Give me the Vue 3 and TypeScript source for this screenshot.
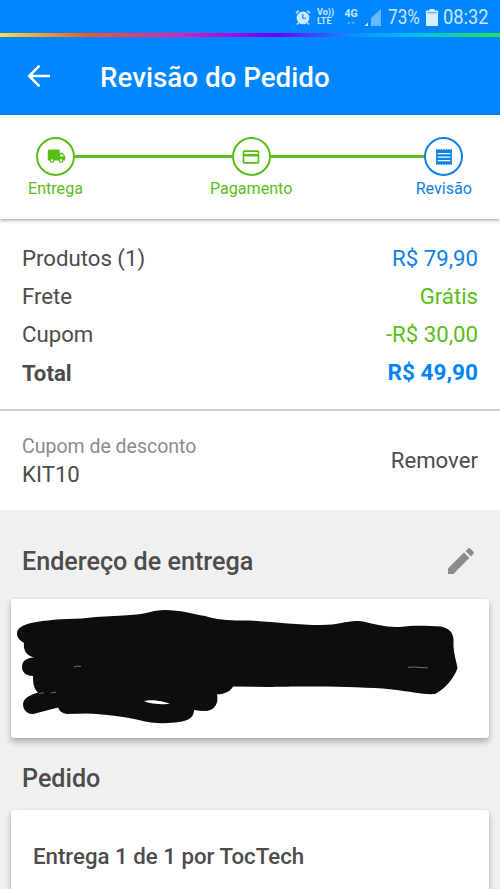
<script setup lang="ts">
type Tone = 'blue' | 'green'

interface SummaryRow {
  label: string
  value: string
  tone: Tone
  total?: boolean
}

const summary: SummaryRow[] = [
  { label: 'Produtos (1)', value: 'R$ 79,90', tone: 'blue' },
  { label: 'Frete', value: 'Grátis', tone: 'green' },
  { label: 'Cupom', value: '-R$ 30,00', tone: 'green' },
  { label: 'Total', value: 'R$ 49,90', tone: 'blue', total: true },
]
</script>

<template>
  <div class="screen">
    <header class="top">
      <div class="status">
        <svg class="alarm" viewBox="0 0 17 17">
          <circle cx="8.5" cy="9" r="6.8" />
          <path class="ears" d="M1 4 4 1.2M16 4 13 1.2M3.8 14 2.2 16M13.2 14l1.6 2" />
          <path class="hands" d="M8.3 5v4.3h3.4" />
        </svg>
        <div class="volte"><span>Vo))</span><span>LTE</span></div>
        <div class="net">
          <span>4G</span>
          <svg viewBox="0 0 11 5"><path d="M2.700 0 5 4H.4zM8.300 5 6 1h4.600z" /></svg>
        </div>
        <svg class="signal" viewBox="0 0 17 17">
          <path class="dim" d="M17 0v17H7V9z" />
          <path class="lit" d="M4 13.500V17H.5z" />
        </svg>
        <span class="pct">73%</span>
        <svg class="battery" viewBox="0 0 12 17">
          <path class="dim" d="M0 2h12v4H0z" />
          <path class="lit" d="M3.300 0h5.400v1.600h2.500q.8 0 .8.8v13.800q0 .8-.8.8H.8q-.8 0-.8-.8V2.400q0-.8.8-.8h2.500zM1.600 3v1.500h8.800V3z" />
        </svg>
        <span class="clock">08:32</span>
      </div>
      <div class="rainbow"></div>
      <div class="appbar">
        <svg class="back" viewBox="0 0 24 24"><path d="M23 12H2.500M12.500 1.700 2.200 12l10.300 10.300" /></svg>
        <h1>Revisão do Pedido</h1>
      </div>
    </header>

    <nav class="steps">
      <div class="step green">
        <div class="ring">
          <svg class="truck" viewBox="0 0 24 24"><path d="M3 3.700q-2 0-2 2v12h2.400a3 3 0 0 0 6 0h5.400a3 3 0 0 0 6 0H23v-5.400L19.700 8H16V3.700zm13.800 6h2.400l2.200 3h-4.600zM6.400 16.200a1.500 1.500 0 1 1 0 3 1.500 1.500 0 0 1 0-3m11.400 0a1.500 1.500 0 1 1 0 3 1.500 1.500 0 0 1 0-3" /></svg>
        </div>
        <span>Entrega</span>
      </div>
      <i class="line first"></i>
      <div class="step green">
        <div class="ring">
          <svg viewBox="0 0 24 24"><path d="M20 4H4c-1.100 0-2 .9-2 2v12c0 1.100.9 2 2 2h16c1.100 0 2-.9 2-2V6c0-1.100-.9-2-2-2m0 14H4v-6.500h16zm0-9.500H4V6h16z" /></svg>
        </div>
        <span>Pagamento</span>
      </div>
      <i class="line second"></i>
      <div class="step blue">
        <div class="ring">
          <svg viewBox="0 0 24 24"><path d="M19.500 17.200h-15v-1.500h15zm0-4.200h-15v-1.500h15zm0-4.300h-15V7.200h15zM2.500 22l1.600-1.500L5.700 22l1.600-1.500L8.900 22l1.600-1.500L12 22l1.500-1.500 1.600 1.500 1.600-1.500 1.600 1.500 1.600-1.500 1.600 1.500V2l-1.600 1.500L18.300 2l-1.600 1.500L15.100 2l-1.600 1.500L12 2l-1.500 1.500L8.900 2 7.300 3.500 5.700 2 4.100 3.500 2.500 2z" /></svg>
        </div>
        <span>Revisão</span>
      </div>
    </nav>

    <section class="summary">
      <div v-for="row in summary" :key="row.label" class="row" :class="{ total: row.total }">
        <span>{{ row.label }}</span>
        <span :class="row.tone">{{ row.value }}</span>
      </div>
    </section>

    <section class="coupon">
      <div>
        <p class="caption">Cupom de desconto</p>
        <p class="code">KIT10</p>
      </div>
      <span class="remove">Remover</span>
    </section>

    <main>
      <div class="heading address">
        <h2>Endereço de entrega</h2>
        <svg viewBox="3 3 18 18"><path d="M3 17.250V21h3.750L17.810 9.940l-3.750-3.750zM20.710 7.040a1 1 0 0 0 0-1.410l-2.340-2.340a1 1 0 0 0-1.410 0l-1.830 1.830 3.750 3.750z" /></svg>
      </div>
      <div class="card redacted">
        <svg viewBox="11 599 478 139">
          <path class="ink" d="M31 623C46 620 61 619 82 618.500C100 616 119 616 137 614.500C149 613 154 610 165 610C180 610 193 614 205 616C219 620 230 621 250 620.500C276 622 296 625 321 625C338 625 346 621 356 621C370 621 375 627 400 627C413 625 429 626 441 626.500C449 628 454 633 453.500 641C453 652 456 659 457.500 668C455 677 444 690 435 694C422 695 404 690 383 688.500C347 686 296 686 267 687L233 686.500C231 691 225 694 217 694.500C219 704 214 711 205 711Q199 711 194 710C194 716 190 720 182 721.500C168 724 153 724 139 720C119 716 103 714 87 713.500L67 714Q60 713 58 707.500L37 713C29 716 23 711 23 704C24 697 31 695 38 692.500C34 689 33 684 33 676C26 676 22 672 22 667C22 661 26 658 34 657.500C27 656 23 651 24 643C19 640 17 637 17 633.500C17 628 23 625 31 623Z" />
          <path class="gap" d="M144 701C151 699 164 701 170 704C162 704.500 149 704 144 701Z" />
          <path class="scratch" d="M74 667q4-1.600 7-.5M39 693.500l5-.7M51 693l5-1M408 667.500l5-.6 7 .6 8 .3" />
        </svg>
      </div>
      <div class="heading order"><h2>Pedido</h2></div>
      <div class="card delivery"><h3>Entrega 1 de 1 por TocTech</h3></div>
    </main>
  </div>
</template>

<style>
body {
  overflow: hidden;
}
</style>

<style scoped>
.screen {
  width: 500px;
  height: 889px;
  overflow: hidden;
  display: flex;
  flex-direction: column;
  background: #f0f0f0;
  color: #4c4c4c;
  font-family: Roboto, sans-serif;
  font-size: 22.200px;
}
h1, h2, h3, p { margin: 0; font-weight: 500; }
svg { display: block; flex: none; }
.top { height: 115px; flex: none; background: #0086ff; color: #fff; }
.status {
  height: 33px;
  box-sizing: border-box;
  padding: 1px 0 0 295px;
  display: flex;
  align-items: center;
  color: #c9e8ff;
  white-space: nowrap;
}
.alarm { width: 16px; height: 17px; fill: #c9e8ff; }
.ears { fill: none; stroke: #c9e8ff; stroke-width: 1.6; }
.hands { fill: none; stroke: #0086ff; stroke-width: 1.3; }
.volte {
  margin-left: 6px;
  width: 17px;
  display: flex;
  flex-direction: column;
  font-size: 9px;
  line-height: 9px;
  font-weight: 700;
}
.net {
  margin-left: 10px;
  width: 14px;
  display: flex;
  flex-direction: column;
  align-items: center;
  font-size: 10.500px;
  line-height: 10px;
  font-weight: 700;
}
.net svg { width: 10px; height: 4px; margin-top: 2px; fill: #4fabff; }
.signal { width: 17px; height: 17px; margin-left: 6px; }
.dim { fill: #69b9ff; }
.lit { fill: #d9efff; fill-rule: evenodd; }
.pct, .clock { font-size: 20.500px; line-height: 30px; transform-origin: left center; }
.pct { margin-left: 6.500px; width: 38.500px; transform: scaleX(.84); }
.battery { width: 12px; height: 17px; }
.clock { margin-left: 5px; transform: scaleX(.89); }
.rainbow {
  height: 4px;
  background: linear-gradient(90deg, #f5e050 0, #f15a24 85px, #e81cb4 180px, #6a00ff 275px, #168cff 355px, #00c0f0 410px, #2be050 500px);
}
.appbar { height: 78px; box-sizing: border-box; padding: 3px 0 0 27px; display: flex; align-items: center; }
.back { width: 24px; height: 24px; margin-bottom: 3px; fill: none; stroke: #fff; stroke-width: 2.5; }
h1 { margin-left: 49px; font-size: 27.750px; line-height: 41px; }
.steps {
  position: relative;
  height: 104px;
  flex: none;
  box-sizing: border-box;
  padding: 22px 28px 0;
  display: flex;
  background: #fff;
  box-shadow: 0 1px 4px rgba(0, 0, 0, .4);
  font-size: 16.100px;
}
.step { display: flex; flex-direction: column; align-items: center; flex: none; }
.step span { margin-top: 3px; line-height: 20px; }
.ring {
  width: 39px;
  height: 39px;
  box-sizing: border-box;
  border: 2px solid currentColor;
  border-radius: 50%;
  display: flex;
  align-items: center;
  justify-content: center;
}
.ring svg { width: 20px; height: 20px; fill: currentColor; }
.ring .truck { width: 19px; margin-left: 3px; margin-bottom: 1px; }
.line { height: 3px; margin-top: 18px; background: #5fbf22; flex: 1; }
.first { margin-left: -8px; margin-right: -22px; flex: 0 0 157px; }
.second { margin-left: -22px; margin-right: -9px; }
.green { color: #59bd18; }
.blue { color: #0f80e6; }
.summary {
  height: 190px;
  flex: none;
  box-sizing: border-box;
  padding: 19.500px 22px 0;
  background: #fff;
  line-height: 38.400px;
}
.row { display: flex; justify-content: space-between; height: 38.400px; }
.total { font-weight: 700; }
.total .blue { font-size: 22.600px; color: #0084f4; }
.coupon {
  height: 101px;
  flex: none;
  box-sizing: border-box;
  padding: 0 22px;
  border-top: 2px solid #cfcfcf;
  display: flex;
  align-items: center;
  justify-content: space-between;
  background: #fff;
}
.coupon p { font-weight: 400; line-height: 28px; }
.coupon .caption { font-size: 19.500px; color: #8c8c8c; }
.coupon .code { margin-top: -1px; margin-bottom: 1px; }
.remove { margin-bottom: 2px; }
.heading {
  height: 89px;
  box-sizing: border-box;
  padding: 14px 26px 0 22px;
  display: flex;
  align-items: center;
  justify-content: space-between;
}
h2 { font-size: 25.150px; line-height: 34px; }
.heading svg { width: 26px; height: 26px; margin-bottom: 2px; fill: #8b8b8b; }
.card {
  margin: 0 11px;
  background: #fff;
  border-radius: 3px;
  box-shadow: 0 4px 6px rgba(0, 0, 0, .28), 0 0 2px rgba(0, 0, 0, .12);
}
.redacted { height: 139px; }
.redacted svg { width: 478px; height: 139px; }
.ink { fill: #0d0d0d; }
.gap { fill: #fff; }
.scratch { fill: none; stroke: #999; stroke-width: .7; }
.order { height: 72px; padding-top: 9px; }
.delivery { height: 120px; padding: 30px 22px 0; box-sizing: border-box; }
h3 { font-size: 22.250px; line-height: 33px; }
</style>
